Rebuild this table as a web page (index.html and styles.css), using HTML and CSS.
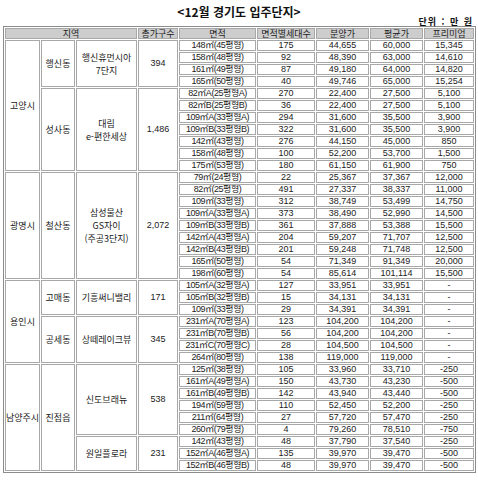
FILE: index.html
```html
<!DOCTYPE html>
<html lang="ko">
<head>
<meta charset="utf-8">
<title>12월 경기도 입주단지</title>
<link rel="stylesheet" href="styles.css">
</head>
<body>
<div class="page">
  <div class="title">&lt;12월 경기도 입주단지&gt;</div>
  <div class="unit">단위 : 만 원</div>
  <table class="grid">
    <colgroup>
      <col class="c-si"><col class="c-dong"><col class="c-apt"><col class="c-tot">
      <col class="c-area"><col class="c-cnt"><col class="c-num"><col class="c-num"><col class="c-prem">
    </colgroup>
    <thead>
      <tr><th colspan="3">지역</th><th>총가구수</th><th>면적</th><th>면적별세대수</th><th>분양가</th><th>평균가</th><th>프리미엄</th></tr>
    </thead>
    <tbody>
      <tr><td rowspan="11" class="k">고양시</td><td rowspan="4" class="k">행신동</td><td rowspan="4" class="k">행신휴먼시아<br>7단지</td><td rowspan="4">394</td><td class="a">148㎡(45평형)</td><td>175</td><td>44,655</td><td>60,000</td><td>15,345</td></tr>
      <tr><td class="a">158㎡(48평형)</td><td>92</td><td>48,390</td><td>63,000</td><td>14,610</td></tr>
      <tr><td class="a">161㎡(49평형)</td><td>87</td><td>49,180</td><td>64,000</td><td>14,820</td></tr>
      <tr><td class="a">165㎡(50평형)</td><td>40</td><td>49,746</td><td>65,000</td><td>15,254</td></tr>
      <tr><td rowspan="7" class="k">성사동</td><td rowspan="7" class="k">대림<br>e-편한세상</td><td rowspan="7">1,486</td><td class="a">82㎡A(25평형A)</td><td>270</td><td>22,400</td><td>27,500</td><td>5,100</td></tr>
      <tr><td class="a">82㎡B(25평형B)</td><td>36</td><td>22,400</td><td>27,500</td><td>5,100</td></tr>
      <tr><td class="a">109㎡A(33평형A)</td><td>294</td><td>31,600</td><td>35,500</td><td>3,900</td></tr>
      <tr><td class="a">109㎡B(33평형B)</td><td>322</td><td>31,600</td><td>35,500</td><td>3,900</td></tr>
      <tr><td class="a">142㎡(43평형)</td><td>276</td><td>44,150</td><td>45,000</td><td>850</td></tr>
      <tr><td class="a">158㎡(48평형)</td><td>100</td><td>52,200</td><td>53,700</td><td>1,500</td></tr>
      <tr><td class="a">175㎡(53평형)</td><td>180</td><td>61,150</td><td>61,900</td><td>750</td></tr>
      <tr><td rowspan="9" class="k">광명시</td><td rowspan="9" class="k">철산동</td><td rowspan="9" class="k">삼성물산<br>GS자이<br>(주공3단지)</td><td rowspan="9">2,072</td><td class="a">79㎡(24평형)</td><td>22</td><td>25,367</td><td>37,367</td><td>12,000</td></tr>
      <tr><td class="a">82㎡(25평형)</td><td>491</td><td>27,337</td><td>38,337</td><td>11,000</td></tr>
      <tr><td class="a">109㎡(33평형)</td><td>312</td><td>38,749</td><td>53,499</td><td>14,750</td></tr>
      <tr><td class="a">109㎡A(33평형A)</td><td>373</td><td>38,490</td><td>52,990</td><td>14,500</td></tr>
      <tr><td class="a">109㎡B(33평형B)</td><td>361</td><td>37,888</td><td>53,388</td><td>15,500</td></tr>
      <tr><td class="a">142㎡A(43평형A)</td><td>204</td><td>59,207</td><td>71,707</td><td>12,500</td></tr>
      <tr><td class="a">142㎡B(43평형B)</td><td>201</td><td>59,248</td><td>71,748</td><td>12,500</td></tr>
      <tr><td class="a">165㎡(50평형)</td><td>54</td><td>71,349</td><td>91,349</td><td>20,000</td></tr>
      <tr><td class="a">198㎡(60평형)</td><td>54</td><td>85,614</td><td>101,114</td><td>15,500</td></tr>
      <tr><td rowspan="7" class="k">용인시</td><td rowspan="3" class="k">고매동</td><td rowspan="3" class="k">기흥써니밸리</td><td rowspan="3">171</td><td class="a">105㎡A(32평형A)</td><td>127</td><td>33,951</td><td>33,951</td><td>-</td></tr>
      <tr><td class="a">105㎡B(32평형B)</td><td>15</td><td>34,131</td><td>34,131</td><td>-</td></tr>
      <tr><td class="a">109㎡(33평형)</td><td>29</td><td>34,391</td><td>34,391</td><td>-</td></tr>
      <tr><td rowspan="4" class="k">공세동</td><td rowspan="4" class="k">상떼레이크뷰</td><td rowspan="4">345</td><td class="a">231㎡A(70평형A)</td><td>123</td><td>104,200</td><td>104,200</td><td>-</td></tr>
      <tr><td class="a">231㎡B(70평형B)</td><td>56</td><td>104,200</td><td>104,200</td><td>-</td></tr>
      <tr><td class="a">231㎡C(70평형C)</td><td>28</td><td>104,500</td><td>104,500</td><td>-</td></tr>
      <tr><td class="a">264㎡(80평형)</td><td>138</td><td>119,000</td><td>119,000</td><td>-</td></tr>
      <tr><td rowspan="9" class="k">남양주시</td><td rowspan="9" class="k">진접읍</td><td rowspan="6" class="k">신도브래뉴</td><td rowspan="6">538</td><td class="a">125㎡(38평형)</td><td>105</td><td>33,960</td><td>33,710</td><td>-250</td></tr>
      <tr><td class="a">161㎡A(49평형A)</td><td>150</td><td>43,730</td><td>43,230</td><td>-500</td></tr>
      <tr><td class="a">161㎡B(49평형B)</td><td>142</td><td>43,940</td><td>43,440</td><td>-500</td></tr>
      <tr><td class="a">194㎡(59평형)</td><td>110</td><td>52,450</td><td>52,200</td><td>-250</td></tr>
      <tr><td class="a">211㎡(64평형)</td><td>27</td><td>57,720</td><td>57,470</td><td>-250</td></tr>
      <tr><td class="a">260㎡(79평형)</td><td>4</td><td>79,260</td><td>78,510</td><td>-750</td></tr>
      <tr><td rowspan="3" class="k">원일플로라</td><td rowspan="3">231</td><td class="a">142㎡(43평형)</td><td>48</td><td>37,790</td><td>37,540</td><td>-250</td></tr>
      <tr><td class="a">152㎡A(46평형A)</td><td>135</td><td>39,970</td><td>39,470</td><td>-500</td></tr>
      <tr><td class="a">152㎡B(46평형B)</td><td>48</td><td>39,970</td><td>39,470</td><td>-500</td></tr>
    </tbody>
  </table>
</div>
</body>
</html>
```
FILE: styles.css
```css
html, body {
  margin: 0;
  padding: 0;
  background: #ffffff;
}
body {
  font-family: "Liberation Sans", "Noto Sans CJK KR", sans-serif;
  color: #222222;
}
.page {
  width: 478px;
}
.title {
  padding-top: 6px;
  height: 12px;
  line-height: 12px;
  font-size: 12px;
  font-weight: bold;
  text-align: center;
  font-family: "Noto Sans CJK KR", sans-serif;
  color: #111111;
}
.unit {
  height: 8px;
  line-height: 8px;
  font-size: 9px;
  font-weight: bold;
  text-align: right;
  padding-right: 5px;
  letter-spacing: 1px;
  word-spacing: 1px;
  font-family: "Noto Sans CJK KR", sans-serif;
  color: #111111;
}
.grid {
  margin-left: 3px;
  width: 473px;
  table-layout: fixed;
  border-collapse: separate;
  border-spacing: 1px;
  border: 1px solid #8c8c8c;
}
.c-si { width: 35px; }
.c-dong { width: 34px; }
.c-apt { width: 61px; }
.c-tot { width: 40px; }
.c-area { width: 77px; }
.c-cnt { width: 58px; }
.c-num { width: 53px; }
.c-prem { width: 50px; }
.grid tr {
  height: 11px;
}
.grid th,
.grid td {
  border: 1px solid #a8a8a8;
  padding: 0;
  font-size: 9px;
  line-height: 9px;
  text-align: center;
  vertical-align: middle;
  white-space: nowrap;
  overflow: hidden;
  font-weight: normal;
}
.grid th {
  background: #cdcdcd;
  font-family: "Noto Sans CJK KR", sans-serif;
  color: #222222;
}
.grid td.k {
  font-family: "Noto Sans CJK KR", sans-serif;
  line-height: 13px;
}
.grid td.a {
  letter-spacing: -0.45px;
}
```
